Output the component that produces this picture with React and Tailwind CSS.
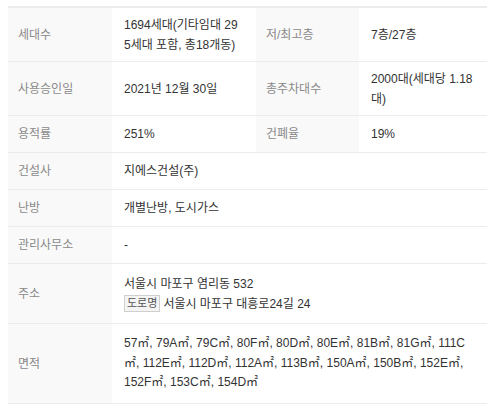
import React from 'react';

const rows = [
  { h: 'h-[54px]', cells: [['세대수', <>1694세대(기타임대 29<br />5세대 포함, 총18개동)</>], ['저/최고층', '7층/27층']] },
  { h: 'h-[54px]', cells: [['사용승인일', '2021년 12월 30일'], ['총주차대수', <>2000대(세대당 1.18<br />대)</>]] },
  { h: 'h-[37px]', cells: [['용적률', '251%'], ['건폐율', '19%']] },
  { h: 'h-[37px]', cells: [['건설사', '지에스건설(주)']] },
  { h: 'h-[37px]', cells: [['난방', '개별난방, 도시가스']] },
  { h: 'h-[37px]', cells: [['관리사무소', '-']] },
  {
    h: 'h-[60px]',
    cells: [['주소', (
      <div className="leading-[20px]">
        <div>서울시 마포구 염리동 532</div>
        <div className="flex items-center">
          <span className="mr-[3px] inline-block border border-[#cfcfcf] bg-[#f4f4f4] px-[2px] text-[11px] leading-[15px] text-[#555]">도로명</span>
          서울시 마포구 대흥로24길 24
        </div>
      </div>
    )]],
  },
  {
    h: 'h-[80px]',
    cells: [['면적', (
      <div className="leading-[19.5px] whitespace-nowrap">
        57㎡, 79A㎡, 79C㎡, 80F㎡, 80D㎡, 80E㎡, 81B㎡, 81G㎡, 111C<br />
        ㎡, 112E㎡, 112D㎡, 112A㎡, 113B㎡, 150A㎡, 150B㎡, 152E㎡,<br />
        152F㎡, 153C㎡, 154D㎡
      </div>
    )]],
  },
];

function Th({ children, w }) {
  return (
    <div className={`${w} flex shrink-0 items-center self-stretch bg-[#f9f9f9] pl-[10px] text-[#8a8a8a]`}>
      {children}
    </div>
  );
}

export default function App() {
  return (
    <div className="h-[410px] w-[500px] bg-white pl-2 pt-[6px] text-[12px] leading-[20px]" style={{ fontFamily: '"Liberation Sans", "Noto Sans CJK KR", sans-serif' }}>
      <div className="w-[479px] border-t-2 border-[#ececec]">
        {rows.map((r, i) => (
          <div key={i} className={`${r.h} flex border-b border-[#ececec]`}>
            <Th w="w-[104px]">{r.cells[0][0]}</Th>
            {r.cells.length === 2 ? (
              <>
                <div className="flex w-[144px] shrink-0 items-center pl-3 text-[#333]">{r.cells[0][1]}</div>
                <Th w="w-[103px]">{r.cells[1][0]}</Th>
                <div className="flex w-[128px] shrink-0 items-center pl-3 text-[#333]">{r.cells[1][1]}</div>
              </>
            ) : (
              <div className="flex flex-1 items-center pl-3 text-[#333]">{r.cells[0][1]}</div>
            )}
          </div>
        ))}
      </div>
    </div>
  );
}
